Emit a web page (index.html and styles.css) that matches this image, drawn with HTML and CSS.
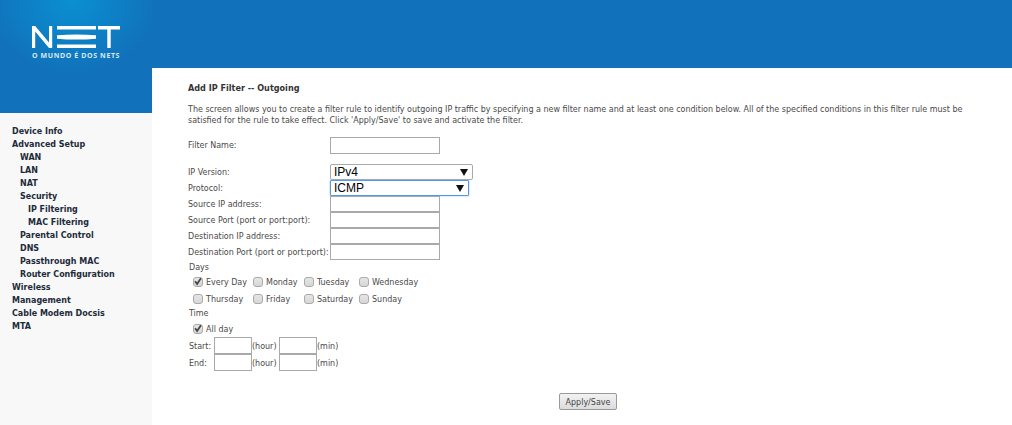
FILE: index.html
```html
<!DOCTYPE html>
<html lang="en">
<head>
<meta charset="utf-8">
<title>Add IP Filter</title>
<link rel="stylesheet" href="styles.css">
</head>
<body>
<div class="page">
  <aside class="side">
    <div class="brand">
      <svg class="logo" width="88" height="22" viewBox="0 0 88 22" aria-label="NET logo">
        <path d="M0 22V0h3.200L17 16.500V0h3.200V22h-3.200L3.200 5.500V22z" fill="#fff"/>
        <path d="M25 0h39v3.400H25zM25 18.600h39V22H25z" fill="#fff"/>
        <path d="M25 9.300q19.500-1.800 39 0v3.400q-19.500 1.800-39 0z" fill="#fff"/>
        <path d="M66 0h22v3.400h-9.300V22h-3.400V3.400H66z" fill="#fff"/>
      </svg>
      <div class="tagline">O MUNDO É DOS NETS</div>
    </div>
    <nav class="nav">
      <a>Device Info</a>
      <a>Advanced Setup</a>
      <a class="l2">WAN</a>
      <a class="l2">LAN</a>
      <a class="l2">NAT</a>
      <a class="l2">Security</a>
      <a class="l3">IP Filtering</a>
      <a class="l3">MAC Filtering</a>
      <a class="l2">Parental Control</a>
      <a class="l2">DNS</a>
      <a class="l2">Passthrough MAC</a>
      <a class="l2">Router Configuration</a>
      <a>Wireless</a>
      <a>Management</a>
      <a>Cable Modem Docsis</a>
      <a>MTA</a>
    </nav>
  </aside>
  <div class="right">
    <div class="band"></div>
    <main class="content">
      <h1 class="title">Add IP Filter -- Outgoing</h1>
      <p class="intro">The screen allows you to create a filter rule to identify outgoing IP traffic by specifying a new filter name and at least one condition below. All of the specified conditions in this filter rule must be satisfied for the rule to take effect. Click 'Apply/Save' to save and activate the filter.</p>
      <div class="row name-row"><label>Filter Name:</label><input class="field" type="text"></div>
      <div class="row ip-row"><label>IP Version:</label><span class="sel sel-ip"><select><option>IPv4</option></select></span></div>
      <div class="row"><label>Protocol:</label><span class="sel sel-proto"><select><option>ICMP</option></select></span></div>
      <div class="row"><label>Source IP address:</label><input class="field" type="text"></div>
      <div class="row"><label>Source Port (port or port:port):</label><input class="field" type="text"></div>
      <div class="row"><label>Destination IP address:</label><input class="field" type="text"></div>
      <div class="row"><label>Destination Port (port or port:port):</label><input class="field" type="text"></div>
      <div class="group-label">Days</div>
      <div class="checks">
        <span class="chk"><span class="box"><svg width="9" height="9" viewBox="0 0 9 9"><path d="M1.200 4.200l2.300 3L7.800.8" fill="none" stroke="#444" stroke-width="2"/></svg></span>Every Day</span>
        <span class="chk"><span class="box"></span>Monday</span>
        <span class="chk"><span class="box"></span>Tuesday</span>
        <span class="chk"><span class="box"></span>Wednesday</span>
        <span class="chk"><span class="box"></span>Thursday</span>
        <span class="chk"><span class="box"></span>Friday</span>
        <span class="chk"><span class="box"></span>Saturday</span>
        <span class="chk"><span class="box"></span>Sunday</span>
      </div>
      <div class="group-label time-label">Time</div>
      <div class="allday"><span class="chk"><span class="box"><svg width="9" height="9" viewBox="0 0 9 9"><path d="M1.200 4.200l2.300 3L7.800.8" fill="none" stroke="#444" stroke-width="2"/></svg></span>All day</span></div>
      <div class="time-row"><span class="t-label">Start:</span><input class="small" type="text"><span class="t-hour">(hour)</span><input class="small" type="text"><span>(min)</span></div>
      <div class="time-row"><span class="t-label">End:</span><input class="small" type="text"><span class="t-hour">(hour)</span><input class="small" type="text"><span>(min)</span></div>
      <div class="actions"><button class="apply" type="button">Apply/Save</button></div>
    </main>
  </div>
</div>
</body>
</html>
```
FILE: styles.css
```css
* { box-sizing: border-box; }
html, body { margin: 0; height: 100%; overflow: hidden; background: #fff; }
body { font-family: "DejaVu Sans Condensed", "DejaVu Sans", sans-serif; font-size: 8.9px; color: #4a4a4a; }
.page { display: flex; height: 425px; width: 1012px; background: #1172bb; }
.side { width: 152px; flex: none; display: flex; flex-direction: column; }
.brand {
  height: 113px; padding: 26px 0 0 32px;
  background: radial-gradient(ellipse 85px 72px at 72px 0, #0a90d2 0%, #1172bb 100%);
}
.logo { display: block; }
.tagline { margin-top: 3px; width: 90px; font: 700 7px/9px "Open Sans", sans-serif; color: #d6e8f5; letter-spacing: .6px; white-space: nowrap; }
.nav { flex: 1; background: #f8f8f8; padding-top: 12px; display: flex; flex-direction: column; }
.nav a { display: block; height: 13px; line-height: 13px; padding-left: 12px; font-weight: 700; color: #1d2b3a; white-space: nowrap; }
.nav a.l2 { padding-left: 20px; }
.nav a.l3 { padding-left: 28px; }
.right { flex: 1; display: flex; flex-direction: column; }
.band { height: 68px; background: #1172bb; }
.content { flex: 1; background: #fff; padding: 14px 36px 0; }
.title { margin: 0; font-size: 9px; line-height: 13px; font-weight: 700; color: #333; }
.intro { margin: 9px 0 0; width: 785px; line-height: 11px; }
.row { display: flex; height: 16px; align-items: center; }
.row label { width: 142px; flex: none; white-space: nowrap; }
.name-row { height: 17px; margin-top: 11px; }
.name-row label { padding-bottom: 1px; }
.ip-row { margin-top: 10px; }
.field { width: 110px; height: 16px; margin: 0; border: 1px solid #a9a9a9; background: #fff; padding: 0; display: block; }
.name-row .field { height: 17px; }
.sel { position: relative; display: block; height: 16px; }
.sel-ip { width: 143px; }
.sel-proto { width: 139px; }
.sel select {
  appearance: none; width: 100%; height: 100%; margin: 0; padding: 0 0 0 3px; display: block;
  font: 12px/14px "Liberation Sans", sans-serif; color: #000; background: #fff;
  border: 1px solid #a9a9a9; border-radius: 2px;
}
.sel-proto select { border: 1px solid #5b97dc; box-shadow: 0 0 2px #8db8ea; border-radius: 1px; }
.sel::after {
  content: ""; position: absolute; right: 5px; top: 5px; width: 8px; height: 7px;
  background: #111; clip-path: polygon(0 0, 100% 0, 50% 100%);
}
.group-label { height: 13px; line-height: 15px; padding-left: 1px; }
.checks { display: grid; grid-template-columns: 60px 51px 55px auto; grid-auto-rows: 17px; width: 240px; padding-left: 5px; }
.chk { display: flex; align-items: center; white-space: nowrap; }
.box { width: 10px; height: 10px; margin-right: 3px; flex: none; border: 1px solid #aaa; border-radius: 3px; background: linear-gradient(#e6e6e6, #d6d6d6); display: flex; align-items: center; justify-content: center; }
.time-label { margin-top: -1px; }
.allday { padding-left: 5px; height: 17px; display: flex; margin-top: 1px; }
.time-row { display: flex; align-items: center; height: 17px; }
.t-label { width: 26px; padding-left: 1px; }
.t-hour { width: 27px; }
.small { width: 38px; height: 17px; margin: 0; padding: 0; border: 1px solid #a9a9a9; background: #fff; }
.actions { display: flex; justify-content: center; margin-top: 22px; padding-left: 12px; }
.apply { width: 58px; height: 17px; padding: 0; font: inherit; color: #444; border: 1px solid #999; border-radius: 2px; background: linear-gradient(#f2f2f2, #dcdcdc); }
```
